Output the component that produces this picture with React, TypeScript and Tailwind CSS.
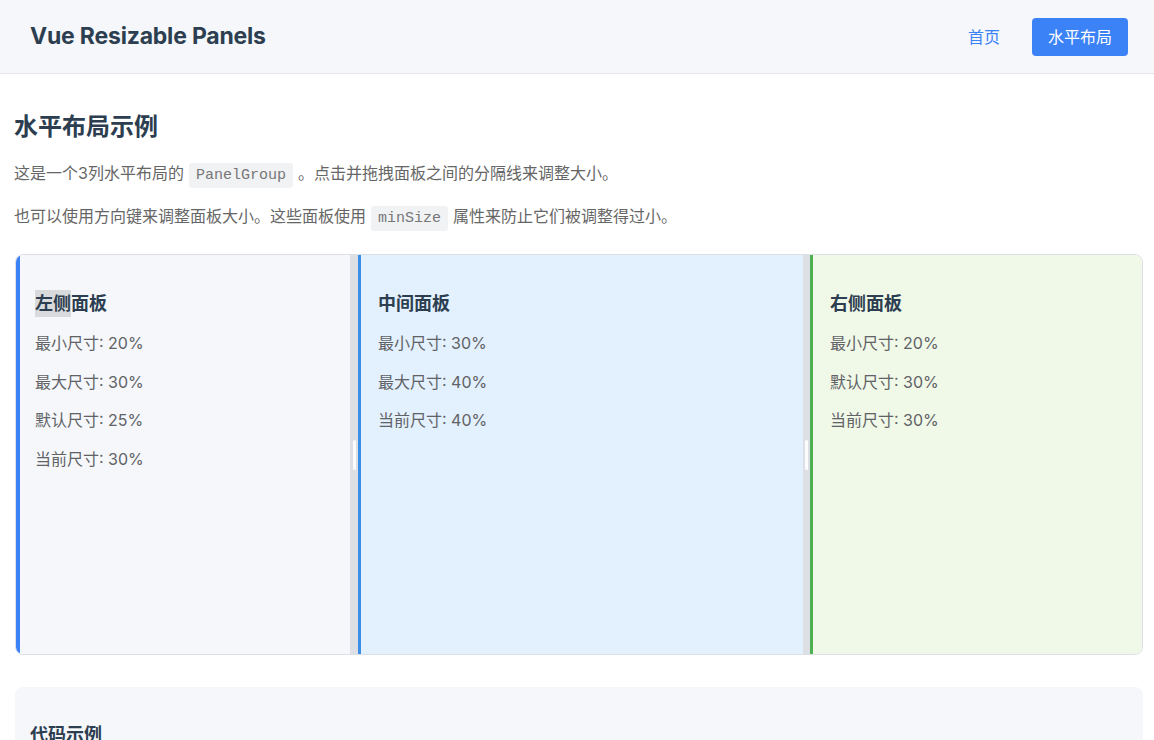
import React from 'react';

const font = { fontFamily: '"Inter", "Noto Sans CJK SC", sans-serif' };

type PanelInfo = {
  title: React.ReactNode;
  lines: string[];
  box: string;
  bg: string;
  edge: string;
};

const panels: PanelInfo[] = [
  {
    title: (
      <>
        <span className="bg-[#d9dadc] py-[3px]">左侧</span>面板
      </>
    ),
    lines: ['最小尺寸: 20%', '最大尺寸: 30%', '默认尺寸: 25%', '当前尺寸: 30%'],
    box: 'w-[334px] border-l-4 pl-[15px]',
    bg: 'bg-[#f5f7fa]',
    edge: 'border-[#3b82f6]',
  },
  {
    title: '中间面板',
    lines: ['最小尺寸: 30%', '最大尺寸: 40%', '当前尺寸: 40%'],
    box: 'flex-1 border-l-[3px] pl-[17px]',
    bg: 'bg-[#e3f0fd]',
    edge: 'border-[#3b8ee6]',
  },
  {
    title: '右侧面板',
    lines: ['最小尺寸: 20%', '默认尺寸: 30%', '当前尺寸: 30%'],
    box: 'w-[332px] border-l-[3px] pl-[17px]',
    bg: 'bg-[#f0f8e8]',
    edge: 'border-[#4caf50]',
  },
];

const Handle = ({ w }: { w: string }) => (
  <div className={`${w} shrink-0 bg-[#dcdfe3] flex items-center justify-center`}>
    <div className="w-[3px] h-[30px] rounded-full bg-white/90" />
  </div>
);

const Panel = ({ p }: { p: PanelInfo }) => (
  <div className={`${p.box} ${p.bg} ${p.edge} shrink-0 pr-[17px] pt-[38px]`}>
    <h3 className="text-[18px] leading-[21px] font-bold text-[#2c3e50] mb-[18px]">{p.title}</h3>
    {p.lines.map((l) => (
      <p key={l} className="text-[16px] leading-[22px] text-[#606266] mb-[16.5px]">
        {l}
      </p>
    ))}
  </div>
);

const Code = ({ children }: { children: React.ReactNode }) => (
  <code
    className="mx-[5px] px-[7px] py-[4px] rounded-[3px] bg-[#f0f2f4] text-[15px] leading-none text-[#777]"
    style={{ fontFamily: '"Liberation Mono", monospace' }}
  >
    {children}
  </code>
);

export default function App() {
  return (
    <div className="min-h-screen bg-white" style={font}>
      <header className="h-[74px] bg-[#f5f7fa] border-b border-[#e4e7ed] flex items-center justify-between pl-[30px] pr-[26px]">
        <h1 className="text-[23px] font-bold text-[#2c3e50] tracking-[-0.2px]">Vue Resizable Panels</h1>
        <nav className="flex items-center gap-[32px]">
          <a className="text-[16px] text-[#3b82f6]">首页</a>
          <a className="h-[38px] px-[16px] rounded-[4px] bg-[#3b82f6] text-white text-[16px] flex items-center">
            水平布局
          </a>
        </nav>
      </header>

      <main className="px-[15px] pr-[11px]">
        <h2 className="text-[24px] font-bold text-[#2c3e50] mt-[36px] mb-[17px] leading-[34px] -ml-[1px]">
          水平布局示例
        </h2>
        <p className="text-[16px] leading-[24px] text-[#666] -ml-[1px]">
          这是一个3列水平布局的<Code>PanelGroup</Code>。点击并拖拽面板之间的分隔线来调整大小。
        </p>
        <p className="text-[16px] leading-[24px] text-[#666] mt-[19px] -ml-[1px]">
          也可以使用方向键来调整面板大小。这些面板使用<Code>minSize</Code>属性来防止它们被调整得过小。
        </p>

        <div className="mt-[26px] h-[401px] flex border border-[#dcdfe6] rounded-[8px] overflow-hidden">
          <Panel p={panels[0]} />
          <Handle w="w-[8px]" />
          <Panel p={panels[1]} />
          <Handle w="w-[7px]" />
          <Panel p={panels[2]} />
        </div>

        <section className="mt-[32px] bg-[#f5f7fa] rounded-[8px] px-[15px] pt-[34px] pb-[20px]">
          <h3 className="text-[18px] font-bold text-[#2c3e50]">代码示例</h3>
        </section>
      </main>
    </div>
  );
}
